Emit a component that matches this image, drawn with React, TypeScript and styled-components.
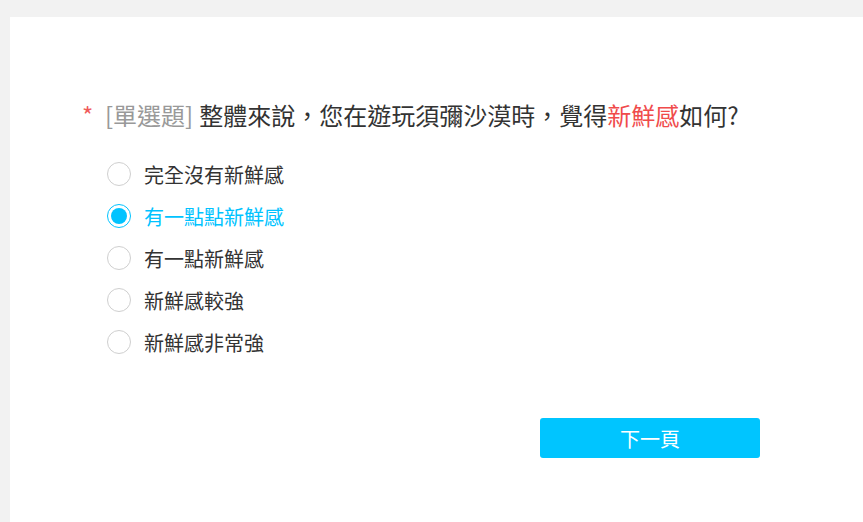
import { FC, useState } from "react";
import styled, { createGlobalStyle } from "styled-components";

const GlobalStyle = createGlobalStyle`
  html, body {
    margin: 0;
    padding: 0;
    background: #f2f2f2;
    font-family: "Noto Sans CJK TC", "Noto Sans", sans-serif;
  }
`;

const Page = styled.div`
  padding: 17px 0 0 10px;
  min-height: 522px;
  box-sizing: border-box;
  display: flex;
`;

const Panel = styled.div`
  flex: 1;
  background: #fff;
  min-height: 505px;
  padding: 80px 0 0 72px;
  box-sizing: border-box;
`;

const Title = styled.h2`
  margin: 0;
  font-size: 24px;
  font-weight: 400;
  line-height: 36px;
  color: #333;
  display: flex;
  align-items: center;
`;

const Required = styled.span`
  color: #f05a5a;
  font-size: 24px;
  width: 23px;
`;

const Kind = styled.span`
  color: #999;
  margin-right: 6px;
`;

const Mark = styled.span`
  color: #f04b4b;
`;

const Options = styled.ul`
  list-style: none;
  margin: 0;
  padding: 20px 0 0 25px;
`;

const Option = styled.li<{ $checked: boolean }>`
  height: 42px;
  display: flex;
  align-items: center;
  gap: 13px;
  font-size: 20px;
  color: ${(p) => (p.$checked ? "#00c3ff" : "#333")};
  cursor: pointer;
`;

const Radio = styled.span<{ $checked: boolean }>`
  width: 24px;
  height: 24px;
  border-radius: 50%;
  box-sizing: border-box;
  border: 1px solid ${(p) => (p.$checked ? "#00c3ff" : "#cfcfcf")};
  background: #fff;
  display: flex;
  align-items: center;
  justify-content: center;

  &::after {
    content: "";
    width: 16px;
    height: 16px;
    border-radius: 50%;
    background: #00c3ff;
    display: ${(p) => (p.$checked ? "block" : "none")};
  }
`;

const Footer = styled.div`
  padding: 55px 0 0 458px;
`;

const NextButton = styled.button`
  width: 220px;
  height: 40px;
  border: none;
  border-radius: 3px;
  background: #00c5ff;
  color: #fff;
  font-family: inherit;
  font-size: 20px;
  cursor: pointer;
`;

const choices = [
  "完全沒有新鮮感",
  "有一點點新鮮感",
  "有一點新鮮感",
  "新鮮感較強",
  "新鮮感非常強",
];

const App: FC = () => {
  const [selected, setSelected] = useState(1);

  return (
    <>
      <GlobalStyle />
      <Page>
        <Panel>
          <Title>
            <Required>*</Required>
            <Kind>[單選題]</Kind>
            <span>
              整體來說，您在遊玩須彌沙漠時，覺得<Mark>新鮮感</Mark>如何?
            </span>
          </Title>
          <Options>
            {choices.map((label, i) => (
              <Option
                key={label}
                $checked={selected === i}
                onClick={() => setSelected(i)}
              >
                <Radio $checked={selected === i} />
                {label}
              </Option>
            ))}
          </Options>
          <Footer>
            <NextButton>下一頁</NextButton>
          </Footer>
        </Panel>
      </Page>
    </>
  );
};

export default App;
